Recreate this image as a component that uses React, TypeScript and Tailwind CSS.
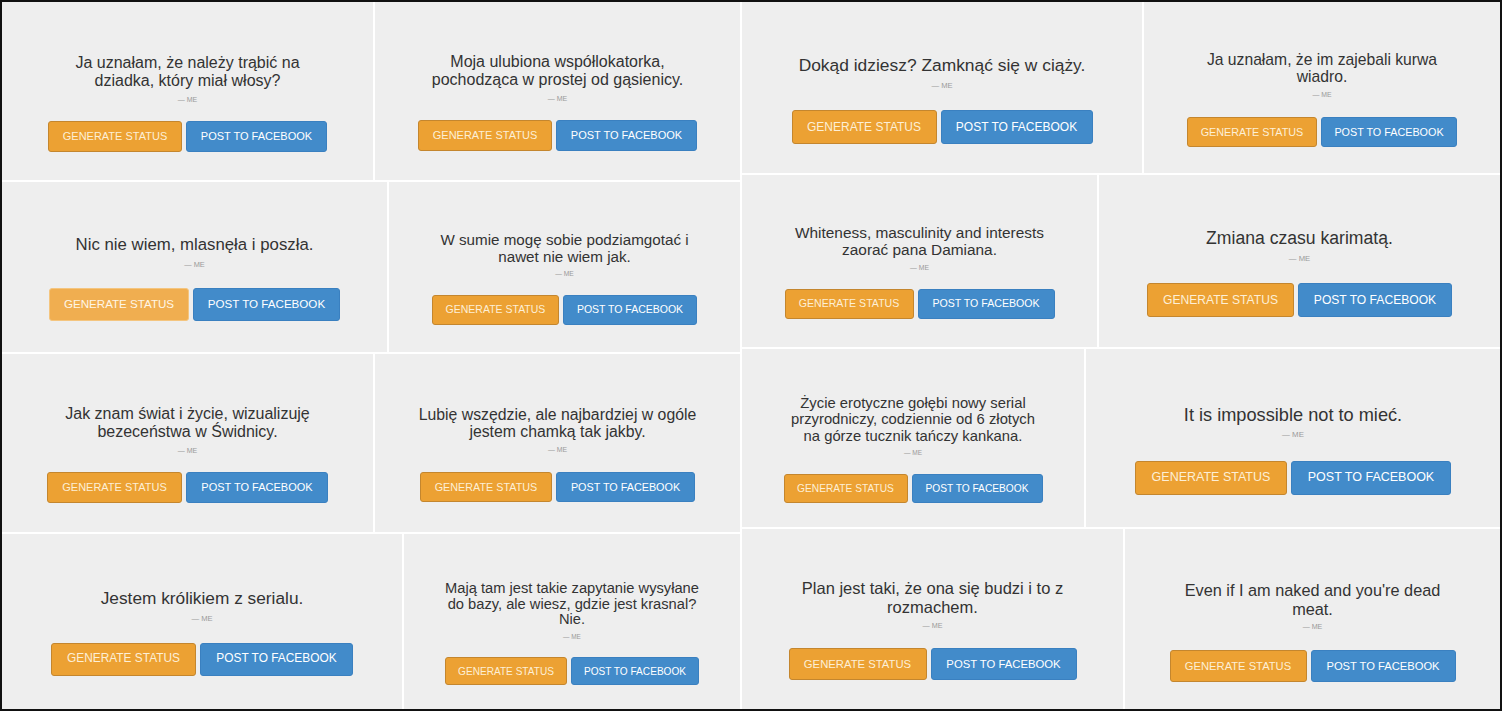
import React from "react";

type Cell = {
  w: string;
  pt: string;
  lines: string[];
  q: string;
  me: string;
  row: string;
  btn: string;
  gen: string;
  fb: string;
  hover?: boolean;
};

type Row = { h: string; cells: Cell[] };

const leftRows: Row[] = [
  {
    h: "h-[178px]",
    cells: [
      {
        w: "w-[371px]",
        pt: "pt-[51.5px]",
        lines: ["Ja uznałam, że należy trąbić na", "dziadka, który miał włosy?"],
        q: "text-[16px] leading-[18px]",
        me: "text-[7px] leading-[11px] mt-[4px]",
        row: "mt-[16.5px]",
        btn: "h-[31px] text-[11px]",
        gen: "w-[134px]",
        fb: "w-[141px]",
      },
      {
        w: "w-[365px]",
        pt: "pt-[50.5px]",
        lines: ["Moja ulubiona współlokatorka,", "pochodząca w prostej od gąsienicy."],
        q: "text-[16px] leading-[18px]",
        me: "text-[7px] leading-[11px] mt-[4px]",
        row: "mt-[16.5px]",
        btn: "h-[31px] text-[11px]",
        gen: "w-[134px]",
        fb: "w-[141px]",
      },
    ],
  },
  {
    h: "h-[170px]",
    cells: [
      {
        w: "w-[385px]",
        pt: "pt-[53.7px]",
        lines: ["Nic nie wiem, mlasnęła i poszła."],
        q: "text-[16.8px] leading-[18.9px]",
        me: "text-[7.4px] leading-[11.6px] mt-[4.2px]",
        row: "mt-[17.3px]",
        btn: "h-[33px] text-[11.6px]",
        gen: "w-[140px]",
        fb: "w-[147px]",
        hover: true,
      },
      {
        w: "w-[351px]",
        pt: "pt-[49px]",
        lines: ["W sumie mogę sobie podziamgotać i", "nawet nie wiem jak."],
        q: "text-[15.2px] leading-[17.1px]",
        me: "text-[6.7px] leading-[10.5px] mt-[3.8px]",
        row: "mt-[15.7px]",
        btn: "h-[29.5px] text-[10.5px]",
        gen: "w-[127px]",
        fb: "w-[134px]",
      },
    ],
  },
  {
    h: "h-[178px]",
    cells: [
      {
        w: "w-[371px]",
        pt: "pt-[50.5px]",
        lines: ["Jak znam świat i życie, wizualizuję", "bezeceństwa w Świdnicy."],
        q: "text-[16px] leading-[18px]",
        me: "text-[7px] leading-[11px] mt-[4px]",
        row: "mt-[16.5px]",
        btn: "h-[31px] text-[11px]",
        gen: "w-[135px]",
        fb: "w-[142px]",
      },
      {
        w: "w-[365px]",
        pt: "pt-[51.5px]",
        lines: ["Lubię wszędzie, ale najbardziej w ogóle", "jestem chamką tak jakby."],
        q: "text-[15.8px] leading-[17.7px]",
        me: "text-[6.9px] leading-[10.8px] mt-[3.9px]",
        row: "mt-[16.3px]",
        btn: "h-[30.5px] text-[10.8px]",
        gen: "w-[132px]",
        fb: "w-[139px]",
      },
    ],
  },
  {
    h: "h-[175px]",
    cells: [
      {
        w: "w-[400px]",
        pt: "pt-[55.3px]",
        lines: ["Jestem królikiem z serialu."],
        q: "text-[17.3px] leading-[19.4px]",
        me: "text-[7.6px] leading-[11.9px] mt-[4.3px]",
        row: "mt-[17.8px]",
        btn: "h-[33px] text-[11.9px]",
        gen: "w-[145px]",
        fb: "w-[153px]",
      },
      {
        w: "w-[336px]",
        pt: "pt-[47px]",
        lines: [
          "Mają tam jest takie zapytanie wysyłane",
          "do bazy, ale wiesz, gdzie jest krasnal?",
          "Nie.",
        ],
        q: "text-[14.7px] leading-[15.7px]",
        me: "text-[6.4px] leading-[10.1px] mt-[3.7px]",
        row: "mt-[15.2px]",
        btn: "h-[28px] text-[10.1px]",
        gen: "w-[122px]",
        fb: "w-[128px]",
      },
    ],
  },
];

const rightRows: Row[] = [
  {
    h: "h-[171px]",
    cells: [
      {
        w: "w-[400px]",
        pt: "pt-[54px]",
        lines: ["Dokąd idziesz? Zamknąć się w ciąży."],
        q: "text-[17.4px] leading-[19.6px]",
        me: "text-[7.6px] leading-[12px] mt-[4.4px]",
        row: "mt-[18px]",
        btn: "h-[34px] text-[12px]",
        gen: "w-[145px]",
        fb: "w-[152px]",
      },
      {
        w: "w-[356px]",
        pt: "pt-[48.7px]",
        lines: ["Ja uznałam, że im zajebali kurwa", "wiadro."],
        q: "text-[15.7px] leading-[17.6px]",
        me: "text-[6.9px] leading-[10.8px] mt-[3.9px]",
        row: "mt-[16.2px]",
        btn: "h-[30px] text-[10.8px]",
        gen: "w-[130px]",
        fb: "w-[136px]",
      },
    ],
  },
  {
    h: "h-[172px]",
    cells: [
      {
        w: "w-[355px]",
        pt: "pt-[48.9px]",
        lines: ["Whiteness, masculinity and interests", "zaorać pana Damiana."],
        q: "text-[15.4px] leading-[17.4px]",
        me: "text-[6.8px] leading-[10.6px] mt-[3.9px]",
        row: "mt-[15.9px]",
        btn: "h-[30px] text-[10.6px]",
        gen: "w-[129px]",
        fb: "w-[137px]",
      },
      {
        w: "w-[401px]",
        pt: "pt-[53.5px]",
        lines: ["Zmiana czasu karimatą."],
        q: "text-[17.6px] leading-[19.8px]",
        me: "text-[7.7px] leading-[12.1px] mt-[4.4px]",
        row: "mt-[18.2px]",
        btn: "h-[34px] text-[12.1px]",
        gen: "w-[147px]",
        fb: "w-[154px]",
      },
    ],
  },
  {
    h: "h-[178px]",
    cells: [
      {
        w: "w-[342px]",
        pt: "pt-[45.5px]",
        lines: [
          "Życie erotyczne gołębi nowy serial",
          "przyrodniczy, codziennie od 6 złotych",
          "na górze tucznik tańczy kankana.",
        ],
        q: "text-[14.8px] leading-[16.7px]",
        me: "text-[6.5px] leading-[10.2px] mt-[3.7px]",
        row: "mt-[15.3px]",
        btn: "h-[29px] text-[10.2px]",
        gen: "w-[124px]",
        fb: "w-[131px]",
      },
      {
        w: "w-[414px]",
        pt: "pt-[55.5px]",
        lines: ["It is impossible not to mieć."],
        q: "text-[18.2px] leading-[20.4px]",
        me: "text-[7.9px] leading-[12.5px] mt-[4.5px]",
        row: "mt-[18.7px]",
        btn: "h-[34px] text-[12.5px]",
        gen: "w-[152px]",
        fb: "w-[160px]",
      },
    ],
  },
  {
    h: "h-[180px]",
    cells: [
      {
        w: "w-[381px]",
        pt: "pt-[50px]",
        lines: ["Plan jest taki, że ona się budzi i to z", "rozmachem."],
        q: "text-[16.5px] leading-[18.5px]",
        me: "text-[7.2px] leading-[11.3px] mt-[4.1px]",
        row: "mt-[17px]",
        btn: "h-[32px] text-[11.3px]",
        gen: "w-[138px]",
        fb: "w-[146px]",
      },
      {
        w: "w-[375px]",
        pt: "pt-[52.2px]",
        lines: ["Even if I am naked and you're dead", "meat."],
        q: "text-[16.3px] leading-[18.4px]",
        me: "text-[7.1px] leading-[11.2px] mt-[4.1px]",
        row: "mt-[16.8px]",
        btn: "h-[32px] text-[11.2px]",
        gen: "w-[137px]",
        fb: "w-[145px]",
      },
    ],
  },
];

const StatusCard: React.FC<{ cell: Cell }> = ({ cell }) => (
  <div
    className={`${cell.w} ${cell.pt} flex-none h-full bg-[#eeeeee] flex flex-col items-center text-center overflow-hidden`}
  >
    <p className={`${cell.q} text-[#333333] whitespace-nowrap`}>
      {cell.lines.map((line, i) => (
        <React.Fragment key={i}>
          {i > 0 && <br />}
          {line}
        </React.Fragment>
      ))}
    </p>
    <p className={`${cell.me} text-[#9a9a9a]`}>— ME</p>
    <div className={`${cell.row} flex gap-[4px]`}>
      <button
        className={`${cell.btn} ${cell.gen} flex items-center justify-center rounded-[3px] border ${
          cell.hover
            ? "bg-[#f0ae50] border-[#f4c57f] text-[#fff6e6]"
            : "bg-[#eca133] border-[#c4862e] text-[#fdefd6]"
        }`}
      >
        GENERATE STATUS
      </button>
      <button
        className={`${cell.btn} ${cell.fb} flex items-center justify-center rounded-[3px] border bg-[#428bca] border-[#3a80c0] text-white`}
      >
        POST TO FACEBOOK
      </button>
    </div>
  </div>
);

const Half: React.FC<{ rows: Row[]; width: string }> = ({ rows, width }) => (
  <div className={`${width} flex-none flex flex-col gap-[2px]`}>
    {rows.map((row, r) => (
      <div key={r} className={`${row.h} flex gap-[2px]`}>
        {row.cells.map((cell, c) => (
          <StatusCard key={c} cell={cell} />
        ))}
      </div>
    ))}
  </div>
);

export default function App() {
  return (
    <div className="w-[1502px] h-[711px] border-2 border-[#111111] bg-white flex gap-[2px] font-['Liberation_Sans',Arial,sans-serif] overflow-hidden">
      <Half rows={leftRows} width="w-[738px]" />
      <Half rows={rightRows} width="w-[758px]" />
    </div>
  );
}
